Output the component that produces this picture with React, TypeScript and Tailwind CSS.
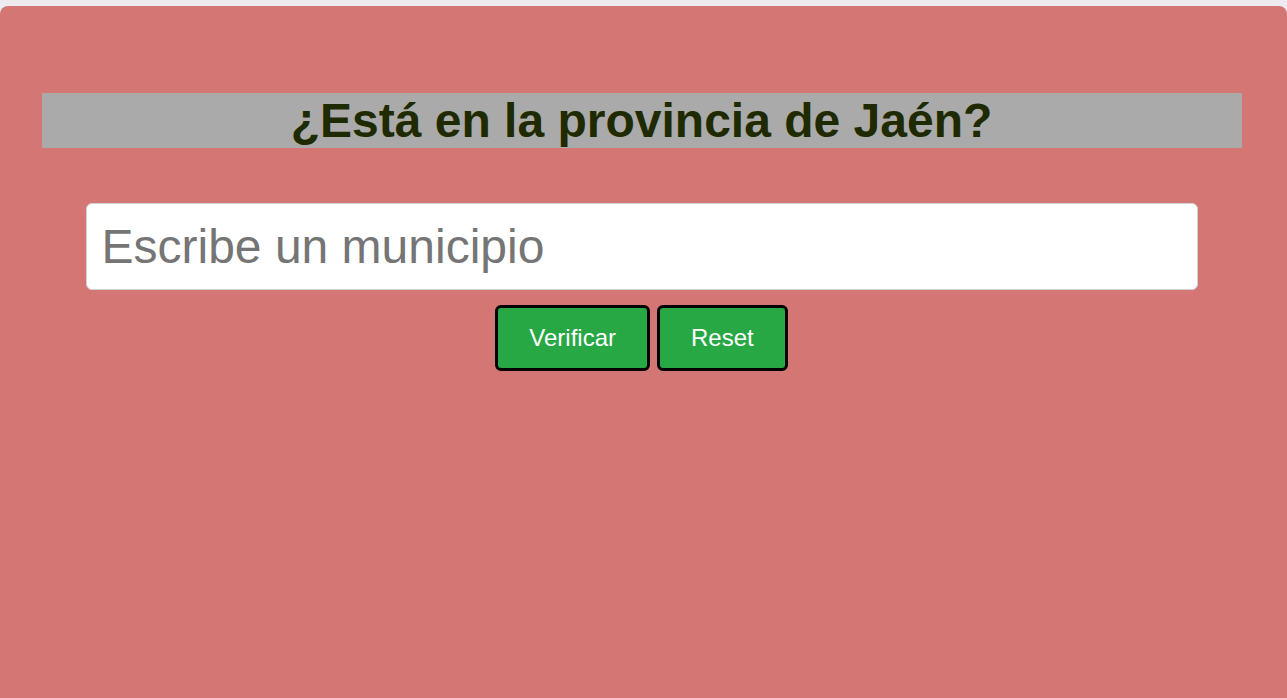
import React from 'react';

export default function App() {
  return (
    <div className="min-h-screen bg-[#ecebf0] pt-[6px] font-['Liberation_Sans',Arial,sans-serif]">
      <div className="min-h-[692px] rounded-t-lg bg-[#d47774] pt-[87px] pr-[4px]">
        {/* HEADING */}
        <div className="mx-auto flex h-[55px] w-[1200px] items-center justify-center bg-[#aaaaaa]">
          <h1 className="text-[48px] font-bold leading-none text-[#1f2a00]">¿Está en la provincia de Jaén?</h1>
        </div>

        {/* INPUT */}
        <div className="mt-[55px] flex justify-center">
          <input
            type="text"
            placeholder="Escribe un municipio"
            className="h-[87px] w-[1112px] rounded-md border border-[#ced4da] bg-white px-[15px] text-[48px] text-[#495057] placeholder:text-[#757575] outline-none"
          />
        </div>

        {/* BUTTONS */}
        <div className="mt-[15px] flex justify-center gap-[7px]">
          <button className="h-[66px] rounded-md border-[3px] border-black bg-[#28a745] px-[31px] text-[24px] text-white">
            Verificar
          </button>
          <button className="h-[66px] rounded-md border-[3px] border-black bg-[#28a745] px-[31px] text-[24px] text-white">
            Reset
          </button>
        </div>
      </div>
    </div>
  );
}
